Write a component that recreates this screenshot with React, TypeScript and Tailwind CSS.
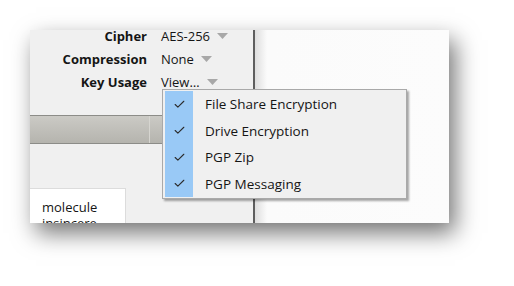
import { Check } from 'lucide-react';

const rows = [
  { label: 'Cipher', value: 'AES-256' },
  { label: 'Compression', value: 'None' },
  { label: 'Key Usage', value: 'View…' },
];

const usages = ['File Share Encryption', 'Drive Encryption', 'PGP Zip', 'PGP Messaging'];

function Caret() {
  return (
    <svg width="11" height="6" viewBox="0 0 11 6" className="ml-[7px]">
      <path d="M0 0 L11 0 L5.5 6 Z" fill="#a8a8a8" />
    </svg>
  );
}

export default function App() {
  return (
    <div
      className="relative w-[514px] h-[286px] bg-white pl-[30px] pt-[30px] text-[13px] text-[#151515]"
      style={{ fontFamily: '"Open Sans", "Noto Sans", sans-serif' }}
    >
      {/* window */}
      <div className="flex w-[419px] h-[193px] overflow-hidden shadow-[6px_10px_22px_rgba(0,0,0,0.55)]">
        {/* left pane */}
        <div className="w-[223px] shrink-0 bg-[#f0f0f0] flex flex-col">
          <div className="mt-[-6px] shrink-0 flex flex-col">
            {rows.map((row) => (
              <div key={row.label} className="flex items-center h-[23px] leading-[10px]">
                <div className="w-[117px] text-right font-bold">{row.label}</div>
                <div className="ml-[14px] flex items-center">
                  <span>{row.value}</span>
                  <Caret />
                </div>
              </div>
            ))}
          </div>

          {/* toolbar strip */}
          <div className="mt-[22px] h-[29px] shrink-0 flex border-t border-b border-[#8c8c88] bg-gradient-to-b from-[#cbcac5] to-[#b5b4ae]">
            <div className="w-[120px] border-r border-[#d6d5d0]" />
            <div className="flex-1" />
          </div>

          {/* list box */}
          <div className="mt-[44px] w-[96px] flex-1 min-h-0 overflow-hidden bg-white border-t border-r border-[#dcdcdc] pl-[12px] pt-[10px] leading-[16px]">
            <div>molecule</div>
            <div>insincere</div>
          </div>
        </div>

        {/* divider */}
        <div className="w-[2px] shrink-0 bg-[#5e5e5e]" />

        {/* right pane */}
        <div className="flex-1 bg-gradient-to-r from-[#dedede] via-[#fbfbfb] via-[12px] to-[#fcfcfc]" />
      </div>

      {/* popup menu */}
      <div className="absolute left-[162px] top-[89px] w-[245px] bg-[#f0f0f0] border border-[#a9a9a9] shadow-[2px_2px_2px_rgba(0,0,0,0.35)] px-[2px] py-[1px] flex flex-col text-[13.5px]">
        {usages.map((u) => (
          <div key={u} className="flex items-center h-[26.5px]">
            <div className="w-[28px] h-full bg-[#99c9f6] flex items-center justify-center">
              <Check size={13} strokeWidth={2} color="#2b2b2b" />
            </div>
            <span className="ml-[12px]">{u}</span>
          </div>
        ))}
      </div>
    </div>
  );
}
